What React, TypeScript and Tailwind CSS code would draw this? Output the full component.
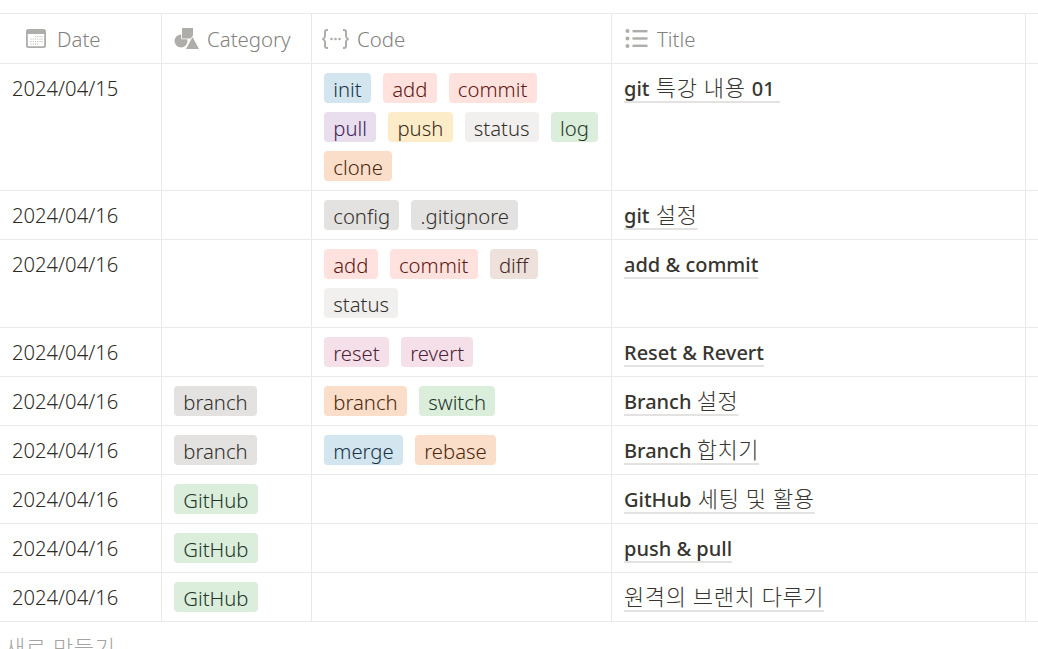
import React from "react";

type Tag = [string, string];
const C: Record<string, string> = {
  blue: "bg-[#d3e5ef] text-[#183347]",
  red: "bg-[#ffe2dd] text-[#5d1715]",
  purple: "bg-[#e8deee] text-[#412454]",
  yellow: "bg-[#fdecc8] text-[#402c1b]",
  light: "bg-[#f1f0ef] text-[#32302c]",
  green: "bg-[#dbeddb] text-[#1c3829]",
  orange: "bg-[#fadec9] text-[#49290e]",
  gray: "bg-[#e3e2e0] text-[#32302c]",
  brown: "bg-[#eee0da] text-[#44291e]",
  pink: "bg-[#f5e0e9] text-[#4c2337]",
};

const B = ({ children }: { children: React.ReactNode }) => <b className="font-medium">{children}</b>;
const K = ({ children }: { children: React.ReactNode }) => (
  <span className="text-[22px] font-light leading-[20px] tracking-[0.6px]">{children}</span>
);

type Row = { h: string; date: string; cat?: Tag; code: Tag[][]; title: React.ReactNode };
const rows: Row[] = [
  { h: "h-[127px]", date: "2024/04/15", code: [[["init", "blue"], ["add", "red"], ["commit", "red"]], [["pull", "purple"], ["push", "yellow"], ["status", "light"], ["log", "green"]], [["clone", "orange"]]], title: <><B>git</B><K> 특강 내용 </K><B>01</B>&nbsp;</> },
  { h: "h-[49px]", date: "2024/04/16", code: [[["config", "gray"], [".gitignore", "gray"]]], title: <><B>git</B><K> 설정</K></> },
  { h: "h-[88px]", date: "2024/04/16", code: [[["add", "red"], ["commit", "red"], ["diff", "brown"]], [["status", "light"]]], title: <B>add &amp; commit</B> },
  { h: "h-[49px]", date: "2024/04/16", code: [[["reset", "pink"], ["revert", "pink"]]], title: <B>Reset &amp; Revert</B> },
  { h: "h-[49px]", date: "2024/04/16", cat: ["branch", "gray"], code: [[["branch", "orange"], ["switch", "green"]]], title: <><B>Branch</B> <K>설정</K></> },
  { h: "h-[49px]", date: "2024/04/16", cat: ["branch", "gray"], code: [[["merge", "blue"], ["rebase", "orange"]]], title: <><B>Branch</B> <K>합치기</K></> },
  { h: "h-[49px]", date: "2024/04/16", cat: ["GitHub", "green"], code: [], title: <><B>GitHub</B><K> 세팅 및 활용</K></> },
  { h: "h-[49px]", date: "2024/04/16", cat: ["GitHub", "green"], code: [], title: <B>push &amp; pull</B> },
  { h: "h-[49px]", date: "2024/04/16", cat: ["GitHub", "green"], code: [], title: <K>원격의 브랜치 다루기</K> },
];

function Pill({ t }: { t: Tag }) {
  return (
    <span className={`inline-flex h-[30px] items-center rounded-[4px] px-[9.25px] pt-[2px] text-[20.3px] font-light ${C[t[1]]}`}>{t[0]}</span>
  );
}

const CalIcon = () => (
  <svg width="20" height="19" viewBox="0 0 20 19" fill="#aeada9" className="shrink-0">
    <path fillRule="evenodd" d="M2.500 0h15A2.500 2.500 0 0 1 20 2.500v14a2.500 2.500 0 0 1-2.500 2.500h-15A2.500 2.500 0 0 1 0 16.500v-14A2.500 2.500 0 0 1 2.500 0ZM1.800 5v11.500c0 .4.300.7.700.7h15c.4 0 .7-.3.7-.7V5Z" />
    {[7.5, 10, 12.5, 15].map((y) => [4.5, 6.8, 9, 11.2, 13.5, 15.5].map((x) => (
      <rect key={`${x}-${y}`} x={x} y={y - 0.5} width="1.100" height="1.100" opacity={(y === 7.5 && x < 9) || (y === 15 && x > 13) ? 0 : 0.8} />
    )))}
  </svg>
);

const ShapesIcon = () => (
  <svg width="25" height="21" viewBox="0 0 25 21" fill="#aeada9" className="shrink-0">
    <circle cx="7" cy="13" r="6.500" />
    <rect x="8" y="0" width="11" height="10.500" stroke="#ffffff" strokeWidth="1.500" paintOrder="stroke" />
    <path d="M18.500 9 25 21H12Z" stroke="#ffffff" strokeWidth="1.500" paintOrder="stroke" />
  </svg>
);

const CodeIcon = () => (
  <svg width="27" height="20" viewBox="0 0 27 20" fill="none" stroke="#aeada9" strokeWidth="2" className="shrink-0">
    <path d="M6 1H5C3.600 1 3 1.700 3 3v4c0 1.300-.7 2.200-2 3 1.300.8 2 1.700 2 3v4c0 1.300.6 2 2 2h1" />
    <path d="M21 1h1c1.400 0 2 .7 2 2v4c0 1.300.7 2.200 2 3-1.300.8-2 1.700-2 3v4c0 1.300-.6 2-2 2h-1" />
    <g fill="#aeada9" stroke="none">
      <circle cx="9.500" cy="10" r="1.300" />
      <circle cx="13.500" cy="10" r="1.300" />
      <circle cx="17.500" cy="10" r="1.300" />
    </g>
  </svg>
);

const ListIcon = () => (
  <svg width="23" height="19" viewBox="0 0 23 19" fill="#aeada9" className="shrink-0">
    <circle cx="2.500" cy="2" r="2" />
    <circle cx="2.500" cy="9.500" r="2" />
    <circle cx="2.500" cy="17" r="2" />
    <rect x="7.500" y="1" width="15" height="2.400" />
    <rect x="7.500" y="8.300" width="15" height="2.400" />
    <rect x="7.500" y="15.600" width="15" height="2.400" />
  </svg>
);

function Head({ w, icon, label, gap }: { w: string; icon: React.ReactNode; label: string; gap: string }) {
  return (
    <div className={`flex h-full shrink-0 items-center border-r border-[#e9e9e7] ${w} ${gap}`}>
      {icon}
      <span className="text-[20.4px] font-light text-[#83827e]">{label}</span>
    </div>
  );
}

export default function App() {
  return (
    <div className="h-[649px] w-[1038px] overflow-hidden bg-white pt-[13px] text-[20px] leading-[30px] text-[#37352f] [font-family:'Noto_Sans','Noto_Sans_CJK_KR',sans-serif]">
      <div className="flex h-[51px] border-y border-[#e9e9e7]">
        <Head w="w-[162px] pl-[26px]" icon={<CalIcon />} label="Date" gap="gap-[11px]" />
        <Head w="w-[150px] pl-3" icon={<ShapesIcon />} label="Category" gap="gap-[8px]" />
        <Head w="w-[300px] pl-[10px]" icon={<CodeIcon />} label="Code" gap="gap-[8px]" />
        <Head w="w-[414px] pl-[13px]" icon={<ListIcon />} label="Title" gap="gap-[9px]" />
      </div>
      {rows.map((r, i) => (
        <div key={i} className={`flex border-b border-[#e9e9e7] ${r.h}`}>
          <div className="w-[162px] shrink-0 border-r border-[#e9e9e7] pl-3 pt-[9px] text-[20.2px] font-light text-[#2c2a25]">{r.date}</div>
          <div className="w-[150px] shrink-0 border-r border-[#e9e9e7] px-3 pt-[9px]">
            {r.cat && <Pill t={r.cat} />}
          </div>
          <div className="flex w-[300px] shrink-0 flex-col gap-[9px] border-r border-[#e9e9e7] px-3 pt-[9px]">
            {r.code.map((line, k) => (
              <div key={k} className="flex gap-3">
                {line.map((t, j) => <Pill key={j} t={t} />)}
              </div>
            ))}
          </div>
          <div className="w-[414px] shrink-0 border-r border-[#e9e9e7] pl-3 pt-[10px]">
            <span className="underline decoration-[#e3e2e0] decoration-2 underline-offset-[5px] [text-decoration-skip-ink:none]">{r.title}</span>
          </div>
        </div>
      ))}
      <div className="pl-[5px] pt-[10px] text-[22px] font-light tracking-[0.6px] text-[#a5a4a0]">새로 만들기</div>
    </div>
  );
}
